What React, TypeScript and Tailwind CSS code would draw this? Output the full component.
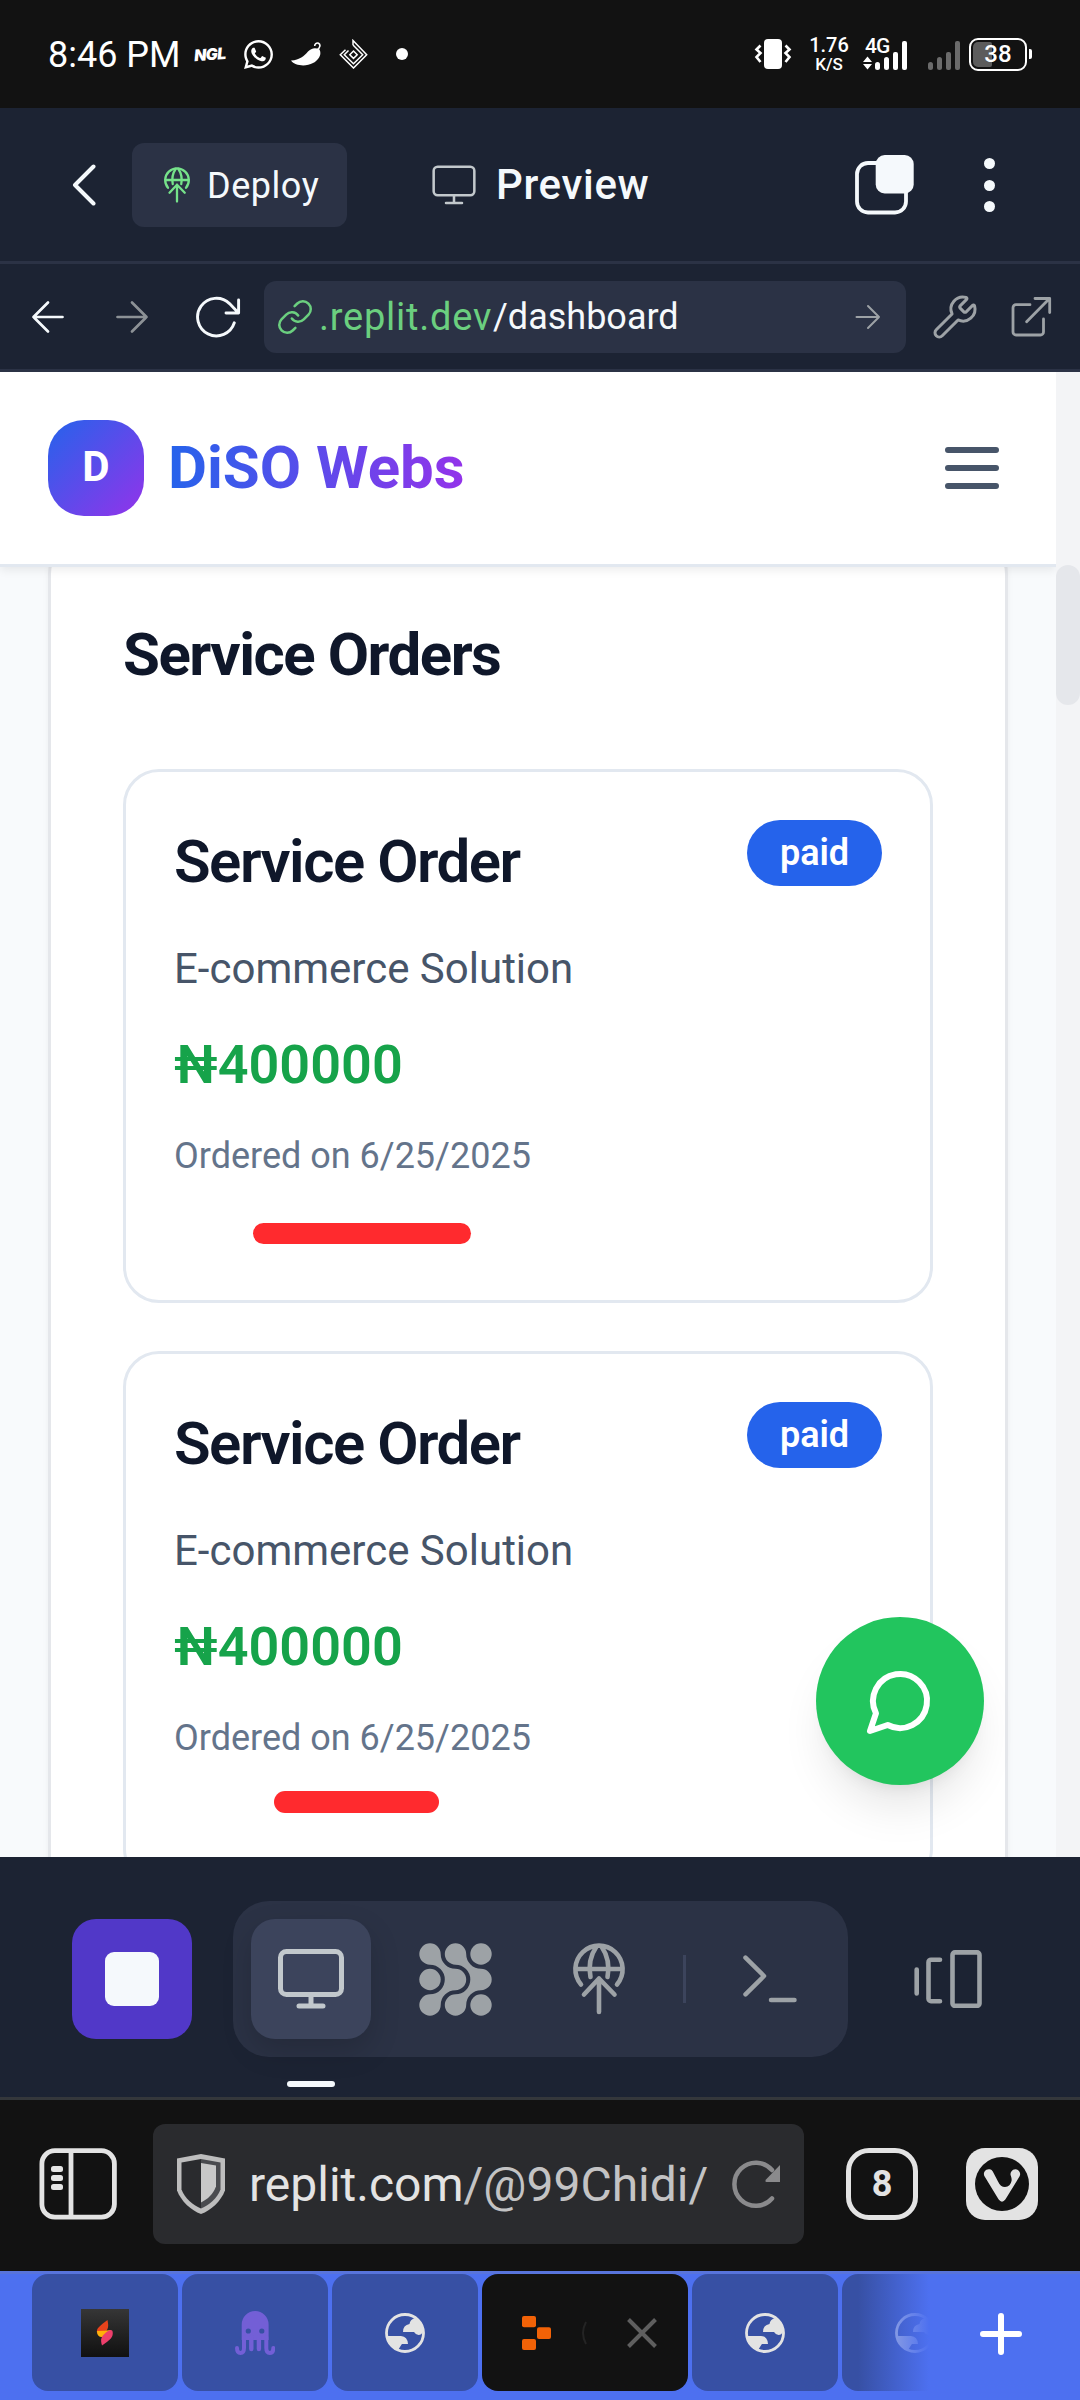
import React from "react";
import { Link, Wrench } from "lucide-react";
import { FaWhatsapp } from "react-icons/fa";

function DeployGlyph({ className, stroke = 4.6 }: { className: string; stroke?: number }) {
  return (
    <svg viewBox="0 0 60 76" className={className} fill="none" stroke="currentColor" strokeWidth={stroke} strokeLinecap="round" strokeLinejoin="round">
      <path d="M12 43.5A23.6 23.6 0 1 1 48 43.5" />
      <path d="M7 28h46M27.5 5.5C21 15 19.500 26 21.500 36M32.500 5.500C39 15 40.500 26 38.500 36" />
      <path d="M30 37.500V71M15 53.500l15-16 15.500 16" />
    </svg>
  );
}

function MonitorGlyph({ className, stroke = 5 }: { className: string; stroke?: number }) {
  return (
    <svg viewBox="0 0 66 60" className={className} fill="none" stroke="currentColor" strokeWidth={stroke} strokeLinecap="round">
      <rect x="2.500" y="2.500" width="61" height="43" rx="6" />
      <path d="M33 46v10M21 57h24" />
    </svg>
  );
}

function Globe({ className }: { className: string }) {
  return (
    <svg viewBox="0 0 40 40" className={className} fill="currentColor">
      <circle cx="20" cy="20" r="18.500" fill="none" stroke="currentColor" strokeWidth="2.800" />
      <path d="M18 19Q18 12 24.500 11Q25 6.500 30 5Q37 9 38 18Q37 22 33.500 22Q31 22 29 19Z" />
      <path d="M2 23H16Q22.500 23.500 23 31H17Q16.500 31 13 37.500Q4 33 2 23Z" />
    </svg>
  );
}

function StatusBar() {
  return (
    <div className="flex h-[108px] items-center bg-[#121212] pl-[48px] text-white">
      <span className="w-[135px] shrink-0 whitespace-nowrap pt-px text-[36px] leading-[42px]">8:46 PM</span>
      <span className="ml-[11px] w-[34px] shrink-0 -rotate-4 font-['Inter'] text-[16px] leading-[20px] font-black italic tracking-[-0.04em]">NGL</span>
      <FaWhatsapp className="ml-[14px] h-[33px] w-[33px] shrink-0" />
      <svg viewBox="0 0 30 24" className="ml-[16px] h-[24px] w-[30px] shrink-0" fill="currentColor">
        <path d="M0 18.500C9 18 13 14 17 9.500C20 6.500 24 5 28.500 7.500C31 12 28 18 22 21C15 25 4 24 0 18.500Z" />
        <path d="M26 8C29 6 30 2.500 27.500 1.200C25.500.500 23.500 2 23.800 4" fill="none" stroke="currentColor" strokeWidth="1.600" />
      </svg>
      <svg viewBox="0 0 30 30" className="ml-[18px] h-[30px] w-[30px] shrink-0" fill="none" stroke="currentColor" strokeWidth="1.500">
        <path d="M14.500 12l3.700 3.700-3.700 3.700-3.700-3.700z" />
        <path d="M9.500 11.500l-4.200 4.200L14.500 24.800l9.200-9.100L14 6" />
        <path d="M6.500 10.700L1.300 15.700 14.500 29l13.200-13.300L14 1.500V6" />
      </svg>
      <span className="ml-[27px] h-[12px] w-[12px] shrink-0 rounded-full bg-white" />

      <svg viewBox="0 0 38 30" className="ml-[346px] h-[30px] w-[38px] shrink-0" fill="none" stroke="currentColor" strokeWidth="2.600">
        <rect x="10" y="0" width="18" height="30" rx="4" fill="currentColor" stroke="none" />
        <path d="M6.500 6.500l-4 4 4 3.500-4 4 4 5M31.500 6.500l4 4-4 3.500 4 4-4 5" />
      </svg>
      <div className="ml-[15px] flex w-[44px] shrink-0 flex-col items-center font-medium">
        <span className="text-[20px] leading-[20px]">1.76</span>
        <span className="text-[17px] leading-[18px]">K/S</span>
      </div>
      <div className="relative ml-[12px] h-[32px] w-[46px] shrink-0">
        <span className="absolute top-[-3px] left-[2px] text-[21px] leading-[22px] font-medium tracking-[-0.04em]">4G</span>
        <svg viewBox="0 0 46 32" className="h-[32px] w-[46px]" fill="currentColor">
          <path d="M4.500 18.500l4.500 5.500H0zM4.500 31.500l4.500-5.500H0z" />
          <rect x="12" y="24" width="5" height="8" rx="2.500" />
          <rect x="21" y="19" width="5" height="13" rx="2.500" />
          <rect x="30" y="14" width="5" height="18" rx="2" />
          <rect x="39" y="3" width="5" height="29" rx="2" />
        </svg>
      </div>
      <svg viewBox="0 0 32 32" className="ml-[19px] h-[32px] w-[32px] shrink-0" fill="#6b6b6b">
        <rect x="0" y="24" width="5" height="8" rx="2.500" />
        <rect x="9" y="19" width="5" height="13" rx="2.500" />
        <rect x="18" y="14" width="5" height="18" rx="2" />
        <rect x="27" y="3" width="5" height="29" rx="2" />
      </svg>
      <div className="relative ml-[9px] flex h-[33px] w-[58px] shrink-0 items-center justify-center rounded-[9px] border-2 border-white">
        <span className="absolute top-[2px] left-[2px] h-[25px] w-[19px] rounded-l-[5px] rounded-r-[2px] bg-[#5c5c5c]" />
        <span className="relative text-[24px] leading-[25px] font-medium">38</span>
      </div>
      <span className="ml-[2px] h-[10px] w-[3px] shrink-0 rounded-r-[2px] bg-white" />
    </div>
  );
}

function ReplitHeader() {
  return (
    <div className="flex h-[156px] items-center border-b-[3px] border-[#2b3245] bg-[#1c2333] pl-[72px] pt-px text-[#f5f9fc]">
      <svg viewBox="0 0 24 42" className="h-[42px] w-[24px] shrink-0" fill="none" stroke="currentColor" strokeWidth="4" strokeLinecap="round" strokeLinejoin="round">
        <path d="M21.500 2.500L3 21l18.500 18.500" />
      </svg>
      <button className="ml-[36px] flex h-[84px] w-[215px] shrink-0 items-center rounded-[12px] bg-[#2b3245] pl-[30px]">
        <DeployGlyph className="h-[38px] w-[30px] text-[#76e28a]" />
        <span className="ml-[15px] pt-px text-[36px] leading-[48px] tracking-[0.015em]">Deploy</span>
      </button>
      <MonitorGlyph className="ml-[85px] h-[40px] w-[44px] shrink-0 text-[#c2c8cc]" stroke={3.8} />
      <span className="ml-[20px] w-[160px] shrink-0 text-[42px] leading-[48px] font-medium tracking-[0.016em]">Preview</span>
      <svg viewBox="0 0 59 60" className="ml-[199px] h-[60px] w-[59px] shrink-0">
        <rect x="2" y="8" width="49" height="49.500" rx="11" fill="none" stroke="currentColor" strokeWidth="3.800" />
        <rect x="20.700" y="0" width="38" height="38.500" rx="9" fill="currentColor" />
      </svg>
      <div className="ml-[70px] flex shrink-0 flex-col gap-[10.5px]">
        <span className="h-[11px] w-[11px] rounded-full bg-current" />
        <span className="h-[11px] w-[11px] rounded-full bg-current" />
        <span className="h-[11px] w-[11px] rounded-full bg-current" />
      </div>
    </div>
  );
}

function PreviewBar() {
  return (
    <div className="flex h-[108px] items-center border-b-[3px] border-[#2b3245] bg-[#1c2333] pl-[31px] text-[#f5f9fc]">
      <svg viewBox="0 0 34 34" className="h-[34px] w-[34px] shrink-0" fill="none" stroke="currentColor" strokeWidth="2.700" strokeLinecap="round" strokeLinejoin="round">
        <path d="M31.500 17H2.500M17 2.500L2.500 17 17 31.500" />
      </svg>
      <svg viewBox="0 0 34 34" className="ml-[50px] h-[34px] w-[34px] shrink-0 text-[#8c9196]" fill="none" stroke="currentColor" strokeWidth="2.700" strokeLinecap="round" strokeLinejoin="round">
        <path d="M2.500 17h29M17 2.500L31.500 17 17 31.500" />
      </svg>
      <svg viewBox="0 0 46 44" className="ml-[46px] h-[44px] w-[46px] shrink-0" fill="none" stroke="currentColor" strokeWidth="2.900" strokeLinecap="round" strokeLinejoin="round">
        <path d="M39.300 27.800A18.800 18.800 0 1 1 34.500 8.600L43.500 18M43.600 5v13H31" />
      </svg>
      <div className="ml-[23px] flex h-[72px] w-[642px] shrink-0 items-center rounded-[12px] bg-[#2b3245] pl-[12px] text-[36px] leading-[48px]">
        <Link className="h-[38px] w-[38px] shrink-0 text-[#6bcf7f]" strokeWidth={1.6} />
        <span className="ml-[5px] w-[174px] shrink-0 pt-px text-[38px] tracking-[0.02em] text-[#6bcf7f]">.replit.dev</span>
        <span className="w-[362px] shrink-0 pt-px">/dashboard</span>
        <svg viewBox="0 0 26 26" className="h-[26px] w-[26px] shrink-0 text-[#9da2a6]" fill="none" stroke="currentColor" strokeWidth="2" strokeLinecap="round" strokeLinejoin="round">
          <path d="M1.500 13h22.500M13 2L24 13 13 24" />
        </svg>
      </div>
      <Wrench className="ml-[25px] h-[48px] w-[48px] shrink-0 text-[#9da2a6]" strokeWidth={1.5} />
      <svg viewBox="0 0 44 44" className="ml-[30px] h-[44px] w-[44px] shrink-0 text-[#9da2a6]" fill="none" stroke="currentColor" strokeWidth="2.800" strokeLinecap="round" strokeLinejoin="round">
        <path d="M21 9.700H7a3 3 0 0 0-3 3V37a3 3 0 0 0 3 3h24.500a3 3 0 0 0 3-3V24" />
        <path d="M17.600 26.700L40.500 3.500M26 3.500h14.700v14" />
      </svg>
    </div>
  );
}

function OrderCard({ children }: { children?: React.ReactNode }) {
  return (
    <div className="relative h-[534px] shrink-0 rounded-[36px] border-[3px] border-[#e2e8f0] bg-white p-[48px]">
      <div className="flex items-start justify-between">
        <h3 className="text-[60px] leading-[84px] font-semibold tracking-[-0.025em] text-[#0f172a]">Service Order</h3>
        <span className="flex h-[66px] w-[135px] items-center justify-center rounded-full bg-[#2563eb] text-[36px] leading-[48px] font-semibold text-white">paid</span>
      </div>
      <p className="mt-[35px] text-[42px] leading-[60px] text-[#475569]">E-commerce Solution</p>
      <p className="mt-[24px] text-[54px] leading-[84px] font-semibold text-[#16a34a]">₦400000</p>
      <p className="mt-[25px] text-[36px] leading-[48px] text-[#64748b]">Ordered on 6/25/2025</p>
      {children}
    </div>
  );
}

function WebPage() {
  return (
    <div className="relative flex h-[1485px] overflow-hidden bg-[#f8fafc]">
      <div className="flex w-[1056px] flex-col overflow-hidden">
        <header className="relative z-10 flex h-[195px] shrink-0 items-center justify-between border-b-[3px] border-[#e2e8f0] bg-white px-[48px] shadow-[0_3px_9px_rgba(0,0,0,0.08)]">
          <div className="flex items-center gap-[24px]">
            <div className="flex h-[96px] w-[96px] items-center justify-center rounded-[36px] bg-linear-to-br/srgb from-[#2563eb] to-[#9333ea] pb-[3px] text-[42px] leading-[60px] font-bold text-white">D</div>
            <span className="bg-linear-to-r/srgb from-[#2563eb] to-[#9333ea] bg-clip-text text-[60px] leading-[84px] font-bold text-transparent">DiSO Webs</span>
          </div>
          <svg viewBox="0 0 72 72" className="h-[72px] w-[72px]" fill="none" stroke="#475569" strokeWidth="6" strokeLinecap="round">
            <path d="M12 18h48M12 36h48M12 54h48" />
          </svg>
        </header>
        <main className="mx-[48px] -mt-[29px] flex shrink-0 flex-col gap-[48px] rounded-[36px] border-[3px] border-[#e5e7eb] bg-white p-[72px] shadow-[0_3px_6px_rgba(0,0,0,0.05)]">
          <h2 className="mb-[24px] text-[60px] leading-[84px] font-bold tracking-[-0.025em] text-[#0f172a]">Service Orders</h2>
          <OrderCard>
            <span className="absolute top-[451px] left-[127px] h-[21px] w-[218px] rounded-full bg-[#ff2a2e]" />
          </OrderCard>
          <OrderCard>
            <span className="absolute top-[437px] left-[148px] h-[22px] w-[165px] rounded-full bg-[#ff2a2e]" />
          </OrderCard>
        </main>
      </div>
      <div className="w-[24px] bg-[#f3f4f6] pt-[193px]">
        <div className="h-[140px] w-[24px] rounded-full bg-[#e5e7eb]" />
      </div>
      <button className="absolute top-[1245px] left-[816px] z-20 flex h-[168px] w-[168px] items-center justify-center rounded-full bg-[#22c55e] shadow-[0_30px_45px_-9px_rgba(0,0,0,0.1),0_12px_18px_-12px_rgba(0,0,0,0.1)]">
        <svg viewBox="0 0 24 24" className="h-[72px] w-[72px]" fill="none" stroke="white" strokeWidth="2" strokeLinecap="round" strokeLinejoin="round">
          <path d="M7.900 20A9 9 0 1 0 4 16.100L2 22Z" />
        </svg>
      </button>
    </div>
  );
}

function ReplitToolbar() {
  return (
    <div className="relative h-[243px] border-b-[3px] border-[#34373b] bg-[#1c2333] pt-[44px]">
      <div className="flex items-center pl-[72px] text-[#9da2a6]">
        <button className="flex h-[120px] w-[120px] shrink-0 items-center justify-center rounded-[24px] bg-[#5138c8]">
          <span className="h-[54px] w-[54px] rounded-[9px] bg-[#f5f9fc]" />
        </button>
        <div className="ml-[41px] flex h-[156px] w-[615px] shrink-0 items-center rounded-[36px] bg-[#2b3245] pl-[18px]">
          <div className="flex h-[120px] w-[120px] shrink-0 items-center justify-center rounded-[24px] bg-[#3c445c] shadow-[0_12px_30px_rgba(2,2,3,0.16)]">
            <MonitorGlyph className="h-[60px] w-[66px] text-[#c2c8cc]" />
          </div>
          <svg viewBox="0 0 73 73" className="ml-[48px] h-[73px] w-[73px] shrink-0" fill="currentColor">
            <path d="M21.700 11A14.800 14.800 0 0 0 36.500 25.800A10.700 10.700 0 0 1 36.500 47.200A14.800 14.800 0 0 0 21.700 62A10.700 10.700 0 1 1 11 51.300A14.800 14.800 0 0 0 11 21.700A10.700 10.700 0 1 1 21.700 11Z" />
            <path transform="translate(25.500 0)" d="M21.700 11A14.800 14.800 0 0 0 36.500 25.800A10.700 10.700 0 0 1 36.500 47.200A14.800 14.800 0 0 0 21.700 62A10.700 10.700 0 1 1 11 51.300A14.800 14.800 0 0 0 11 21.700A10.700 10.700 0 1 1 21.700 11Z" />
            <circle cx="11" cy="36.500" r="10.700" />
            <circle cx="62" cy="11" r="10.700" />
            <circle cx="62" cy="62" r="10.700" />
          </svg>
          <DeployGlyph className="ml-[77px] h-[76px] w-[60px] shrink-0" />
          <span className="ml-[54px] h-[48px] w-[3px] shrink-0 bg-[#3c445c]" />
          <svg viewBox="0 0 54 48" className="ml-[57px] h-[48px] w-[54px] shrink-0" fill="none" stroke="currentColor" strokeWidth="4.500" strokeLinecap="round" strokeLinejoin="round">
            <path d="M2.500 2.700L21 21 2.500 39.300M28 45h23.500" />
          </svg>
        </div>
        <svg viewBox="0 0 68 58" className="ml-[66px] h-[58px] w-[68px] shrink-0" fill="none" stroke="currentColor" strokeWidth="4.600" strokeLinecap="round" strokeLinejoin="round">
          <path d="M2.700 19.500v24M26 9.700H17a2.500 2.500 0 0 0-2.500 2.500v36.500a2.500 2.500 0 0 0 2.500 2.500h9" />
          <rect x="38.500" y="2.400" width="27" height="53.500" rx="2.500" />
        </svg>
      </div>
      <span className="absolute top-[224px] left-[287px] h-[6px] w-[48px] rounded-full bg-[#f5f9fc]" />
    </div>
  );
}

function BrowserBar() {
  return (
    <div className="flex h-[171px] items-center bg-[#121212] pb-[3px] pl-[39px] text-[#e3e3e3]">
      <svg viewBox="0 0 78 72" className="h-[72px] w-[78px] shrink-0">
        <rect x="2.900" y="2.700" width="72.500" height="66.500" rx="13" fill="none" stroke="currentColor" strokeWidth="4.800" />
        <path d="M32 3v66" stroke="currentColor" strokeWidth="4.800" />
        <rect x="12" y="18" width="12" height="6" rx="2.500" fill="currentColor" />
        <rect x="12" y="27" width="12" height="6" rx="2.500" fill="currentColor" />
        <rect x="12" y="36" width="12" height="6" rx="2.500" fill="currentColor" />
      </svg>
      <div className="ml-[36px] flex h-[120px] w-[651px] shrink-0 items-center rounded-[12px] bg-[#2a2b2e] pl-[24px]">
        <svg viewBox="0 0 48 60" className="h-[60px] w-[48px] shrink-0">
          <path d="M24 0L48 4.500V36.500C44 47 34 56.500 24 60C14 56.500 4 47 0 36.500V4.500Z" fill="#bdbdbd" />
          <path d="M24 5L4.500 8.500V35.500C8 44.500 15.500 51 24 54.500Z" fill="#2a2b2e" />
          <path d="M24 5L43.500 8.500V35.500C40 44.500 32.500 51 24 54.500Z" fill="#4a4b4f" />
          <path d="M24 9L39 11.500V32.500C36 40 31 45 24 48.500Z" fill="#c8c8c8" />
        </svg>
        <span className="ml-[24px] w-[480px] shrink-0 whitespace-nowrap pt-px text-[48px] leading-[60px]">
          replit.com<span className="text-[#c3c3c4]">/@99Chidi/</span>
        </span>
        <svg viewBox="0 0 50 50" className="ml-[3px] h-[50px] w-[50px] shrink-0" fill="none" stroke="#8a8a8c" strokeWidth="4.500" strokeLinecap="round">
          <path d="M40 39.500A21.500 21.500 0 1 1 40 11" />
          <path d="M48 6v17H34.500q-2-.500-.500-2.500z" fill="#8a8a8c" stroke="none" />
        </svg>
      </div>
      <div className="ml-[42px] flex h-[72px] w-[72px] shrink-0 items-center justify-center rounded-[23px] border-[5px] border-current text-[36px] leading-[40px] font-bold">8</div>
      <svg viewBox="0 0 72 72" className="ml-[48px] h-[72px] w-[72px] shrink-0">
        <rect width="72" height="72" rx="19" fill="currentColor" />
        <circle cx="36" cy="36" r="27" fill="#121212" />
        <path d="M18.500 28.200A4.700 4.700 0 0 1 26.800 23.600L32 33.500Q34.500 39 39 39Q44.500 38.500 45.500 33Q46 31 44.900 28A4.800 4.800 0 1 1 53.600 28.300L39.500 51.300Q36 56 32.500 51.300Z" fill="currentColor" />
      </svg>
    </div>
  );
}

function TabStrip() {
  return (
    <div className="relative flex h-[129px] gap-[4px] overflow-hidden border-t-[3px] border-[#5874dc] bg-[#4d70f0] pl-[32px] text-[#e3e3e3]">
      <div className="flex h-[117px] w-[146px] shrink-0 items-center justify-center rounded-[16px] bg-[#3750a4]">
        <div className="flex h-[48px] w-[48px] items-center justify-center bg-linear-to-b from-[#363636] to-[#111]">
          <svg viewBox="0 0 18 26" className="h-[26px] w-[18px]">
            <path d="M11.500 0C4 6 0 8 1 13L6 17L11 10C13 7 12 3 11.500 0Z" fill="#e8431c" />
            <path d="M1 11Q9 11 15 10Q13 17 6 17Q1 17 1 11Z" fill="#ffb10a" />
            <path d="M6 25.500C14 20 18 17 16.500 11Q15 9 12 11C5 16 4 19 6 25.500Z" fill="#ee3f6c" />
          </svg>
        </div>
      </div>
      <div className="flex h-[117px] w-[146px] shrink-0 items-center justify-center rounded-[16px] bg-[#3750a4]">
        <svg viewBox="0 0 40 44" className="h-[44px] w-[40px]" fill="#735fd6">
          <path d="M6.700 13.500a13.400 13.400 0 0 1 26.900 0V29H6.700Z" />
          <path d="M9 26v11q0 5-3.500 5T2 37M31.300 26v11q0 5 3.500 5t3.500-5" fill="none" stroke="#735fd6" strokeWidth="4" strokeLinecap="round" />
          <path d="M16.300 26v12M23.900 26v12" stroke="#735fd6" strokeWidth="4.400" strokeLinecap="round" />
          <circle cx="13.300" cy="20" r="2.600" fill="#3750a4" />
          <circle cx="26.800" cy="20" r="2.600" fill="#3750a4" />
        </svg>
      </div>
      <div className="flex h-[117px] w-[146px] shrink-0 items-center justify-center rounded-[16px] bg-[#3750a4]">
        <Globe className="h-[40px] w-[40px]" />
      </div>
      <div className="flex h-[117px] w-[206px] shrink-0 items-center rounded-[16px] bg-[#121212] pl-[40px]">
        <svg viewBox="0 0 29 34" className="h-[34px] w-[29px]" fill="#f26207">
          <rect width="14" height="11.300" rx="2" />
          <rect x="15" y="11.300" width="14" height="11.700" rx="2" />
          <rect y="23" width="14" height="11" rx="2" />
        </svg>
        <svg viewBox="0 0 8 24" className="ml-[30px] h-[24px] w-[8px]" fill="none" stroke="#242424" strokeWidth="2">
          <path d="M5 1Q-1 12 5 23" />
        </svg>
        <svg viewBox="0 0 30 30" className="ml-[38px] h-[30px] w-[30px]" stroke="#5f5f5f" strokeWidth="4">
          <path d="M1.500 1.500l27 27M28.500 1.500l-27 27" />
        </svg>
      </div>
      <div className="flex h-[117px] w-[146px] shrink-0 items-center justify-center rounded-[16px] bg-[#3750a4]">
        <Globe className="h-[40px] w-[40px]" />
      </div>
      <div className="flex h-[117px] w-[146px] shrink-0 items-center justify-center rounded-[16px] bg-[#3750a4]">
        <Globe className="h-[40px] w-[40px] opacity-80" />
      </div>
      <div className="absolute inset-y-0 right-0 flex w-[222px] items-center bg-linear-to-r from-[#4d70f0]/0 from-0% to-[#4d70f0] to-32% pb-[6px] pl-[122px]">
        <svg viewBox="0 0 42 42" className="h-[42px] w-[42px]" stroke="white" strokeWidth="6" strokeLinecap="round">
          <path d="M21 3v36M3 21h36" />
        </svg>
      </div>
    </div>
  );
}

export default function App() {
  return (
    <div className="flex h-[2400px] w-[1080px] flex-col overflow-hidden bg-[#121212] font-['Roboto',sans-serif] *:shrink-0">
      <StatusBar />
      <ReplitHeader />
      <PreviewBar />
      <WebPage />
      <ReplitToolbar />
      <BrowserBar />
      <TabStrip />
    </div>
  );
}
